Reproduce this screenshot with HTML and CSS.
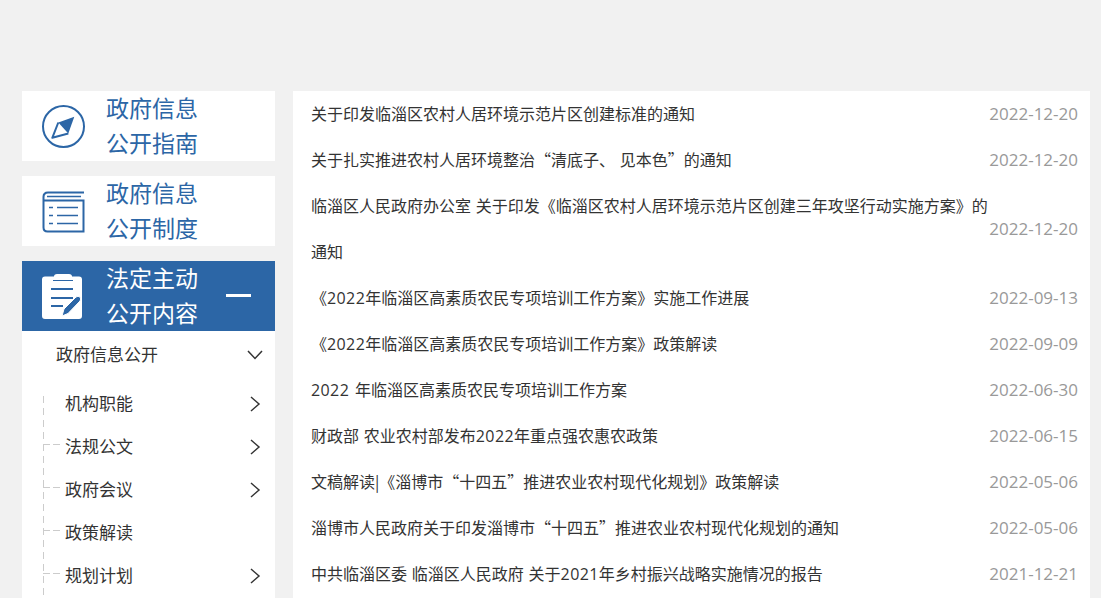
FILE: index.html
```html
<!DOCTYPE html>
<html lang="zh-CN">
<head>
<meta charset="utf-8">
<title>政府信息公开</title>
<link rel="stylesheet" href="styles.css">
</head>
<body>
<div class="page">
  <aside class="side">
    <a class="card">
      <svg class="card-icon" viewBox="0 0 43 43"><circle cx="21.500" cy="21.500" r="20.500" fill="none" stroke="#2c66a6" stroke-width="2"/><path d="M32.300 11.800 L16.300 17.500 L26.300 28.500 Z" fill="#2c66a6"/><path d="M16.300 17.500 L10.300 32.800 L26.300 28.500" fill="none" stroke="#2c66a6" stroke-width="2" stroke-linejoin="round"/></svg>
      <span class="card-title">政府信息<br>公开指南</span>
    </a>
    <a class="card">
      <svg class="card-icon" viewBox="0 0 43 43"><g fill="none" stroke="#2c66a6"><path d="M42 2.500 H6 Q1.500 2.500 1.500 7 V37.500 Q1.500 41.500 5.500 41.500 H41.500 V10.500 H2" stroke-width="2"/><path d="M5 6.500 H39" stroke-width="1.500"/><path d="M7 17.500 H11 M15 17.500 H36 M7 25.500 H11 M15 25.500 H36 M7 33.500 H11 M15 33.500 H36" stroke-width="1.500"/></g></svg>
      <span class="card-title">政府信息<br>公开制度</span>
    </a>
    <a class="card card-active">
      <svg class="card-icon card-icon-tall" viewBox="0 0 43 45"><path d="M3 2.500 H12 Q12 0 15 0 H27 Q30 0 30 2.500 H37 Q40 2.500 40 5.500 V42 Q40 45 37 45 H3 Q0 45 0 42 V5.500 Q0 2.500 3 2.500 Z" fill="#fff"/><path d="M11 6.500 H31" stroke="#2c66a6" stroke-width="1"/><path d="M9 15 H31 M9 24 H31 M9 32 H21" stroke="#2c66a6" stroke-width="2"/><path d="M20 42 L22 35 L34 23 Q36 21.500 38 23 Q39.500 25 38 27 L26 39.500 Z" fill="#2c66a6" stroke="#fff" stroke-width="1"/></svg>
      <span class="card-title">法定主动<br>公开内容</span>
      <span class="minus"></span>
    </a>
    <div class="menu">
      <div class="menu-head">
        <span>政府信息公开</span>
        <svg class="chev" viewBox="0 0 16 16"><path d="M1 4 L8 11.500 L15 4" fill="none" stroke="#333" stroke-width="1.500"/></svg>
      </div>
      <ul class="tree">
        <li class="tree-item"><span>机构职能</span><svg class="chev" viewBox="0 0 16 16"><path d="M4 1 L12 8 L4 15" fill="none" stroke="#333" stroke-width="1.500"/></svg></li>
        <li class="tree-item"><span>法规公文</span><svg class="chev" viewBox="0 0 16 16"><path d="M4 1 L12 8 L4 15" fill="none" stroke="#333" stroke-width="1.500"/></svg></li>
        <li class="tree-item"><span>政府会议</span><svg class="chev" viewBox="0 0 16 16"><path d="M4 1 L12 8 L4 15" fill="none" stroke="#333" stroke-width="1.500"/></svg></li>
        <li class="tree-item"><span>政策解读</span></li>
        <li class="tree-item"><span>规划计划</span><svg class="chev" viewBox="0 0 16 16"><path d="M4 1 L12 8 L4 15" fill="none" stroke="#333" stroke-width="1.500"/></svg></li>
      </ul>
    </div>
  </aside>
  <main class="panel">
    <ul class="list">
      <li class="row"><a class="title">关于印发临淄区农村人居环境示范片区创建标准的通知</a><span class="date">2022-12-20</span></li>
      <li class="row"><a class="title">关于扎实推进农村人居环境整治“清底子、 见本色”的通知</a><span class="date">2022-12-20</span></li>
      <li class="row"><a class="title">临淄区人民政府办公室 关于印发《临淄区农村人居环境示范片区创建三年攻坚行动实施方案》的通知</a><span class="date">2022-12-20</span></li>
      <li class="row"><a class="title">《<span class="num">2022</span>年临淄区高素质农民专项培训工作方案》实施工作进展</a><span class="date">2022-09-13</span></li>
      <li class="row"><a class="title">《<span class="num">2022</span>年临淄区高素质农民专项培训工作方案》政策解读</a><span class="date">2022-09-09</span></li>
      <li class="row"><a class="title"><span class="num">2022 </span>年临淄区高素质农民专项培训工作方案</a><span class="date">2022-06-30</span></li>
      <li class="row"><a class="title">财政部 农业农村部发布<span class="num">2022</span>年重点强农惠农政策</a><span class="date">2022-06-15</span></li>
      <li class="row"><a class="title">文稿解读|《淄博市“十四五”推进农业农村现代化规划》政策解读</a><span class="date">2022-05-06</span></li>
      <li class="row"><a class="title">淄博市人民政府关于印发淄博市“十四五”推进农业农村现代化规划的通知</a><span class="date">2022-05-06</span></li>
      <li class="row"><a class="title">中共临淄区委 临淄区人民政府 关于<span class="num">2021</span>年乡村振兴战略实施情况的报告</a><span class="date">2021-12-21</span></li>
    </ul>
  </main>
</div>
</body>
</html>
```
FILE: styles.css
```css
* { box-sizing: border-box; }
html, body { margin: 0; height: 598px; overflow: hidden; }
body {
  background: #f1f1f1;
  font-family: "Noto Sans CJK SC", "Noto Sans", sans-serif;
  color: #333;
}
ul { list-style: none; margin: 0; padding: 0; }
.page {
  display: flex;
  align-items: flex-start;
  height: 598px;
  overflow: hidden;
  padding: 91px 11px 0 22px;
  gap: 18px;
}
.side { width: 253px; flex: none; display: flex; flex-direction: column; gap: 15px; }
.card {
  height: 70px;
  background: #fff;
  color: #2c66a6;
  display: flex;
  align-items: center;
  padding-left: 20px;
}
.card-icon { width: 43px; height: 43px; flex: none; }
.card-icon-tall { height: 45px; }
.card-title {
  margin: 0 0 2px 21px;
  font-size: 23px;
  line-height: 35px;
}
.card-active { background: #2c66a6; color: #fff; }
.minus {
  width: 25px;
  height: 3px;
  background: #fff;
  margin: 0 0 2px 28px;
}
.menu { background: #fff; margin-top: -15px; height: 300px; }
.menu-head {
  height: 44px;
  display: flex;
  align-items: center;
  justify-content: space-between;
  padding: 0 12px 0 34px;
  font-size: 17px;
}
.chev { width: 16px; height: 16px; flex: none; margin-top: 4px; }
.tree-item .chev { margin-top: 3px; }
.tree {
  position: relative;
  margin-left: 21px;
  padding-top: 6px;
}
.tree::before {
  content: "";
  position: absolute;
  left: 0;
  top: 21px;
  bottom: 0;
  width: 1px;
  background: repeating-linear-gradient(to bottom, #ccc 0 7px, transparent 7px 12px);
}
.tree-item {
  height: 43px;
  display: flex;
  align-items: center;
  justify-content: space-between;
  padding: 0 12px 0 22px;
  font-size: 17px;
  position: relative;
}
.tree-item + .tree-item::before {
  content: "";
  position: absolute;
  left: 0;
  top: 20px;
  width: 17px;
  height: 1px;
  background: linear-gradient(to right, #ccc 0 7px, transparent 7px 10px, #ccc 10px 17px);
}
.panel { flex: 1; min-width: 0; background: #fff; padding: 0 12px 0 18px; height: 520px; }
.row {
  display: flex;
  align-items: center;
  justify-content: space-between;
  font-size: 16px;
  line-height: 46px;
}
.title { width: 678px; flex: none; color: #333; margin: -1px 0 1px; word-spacing: 1.2px; }
.num { font-family: "Open Sans", sans-serif; line-height: 1; letter-spacing: 0.4px; }
.date {
  flex: none;
  white-space: nowrap;
  font-family: "Open Sans", sans-serif;
  font-size: 17px;
  color: #999;
}
```
